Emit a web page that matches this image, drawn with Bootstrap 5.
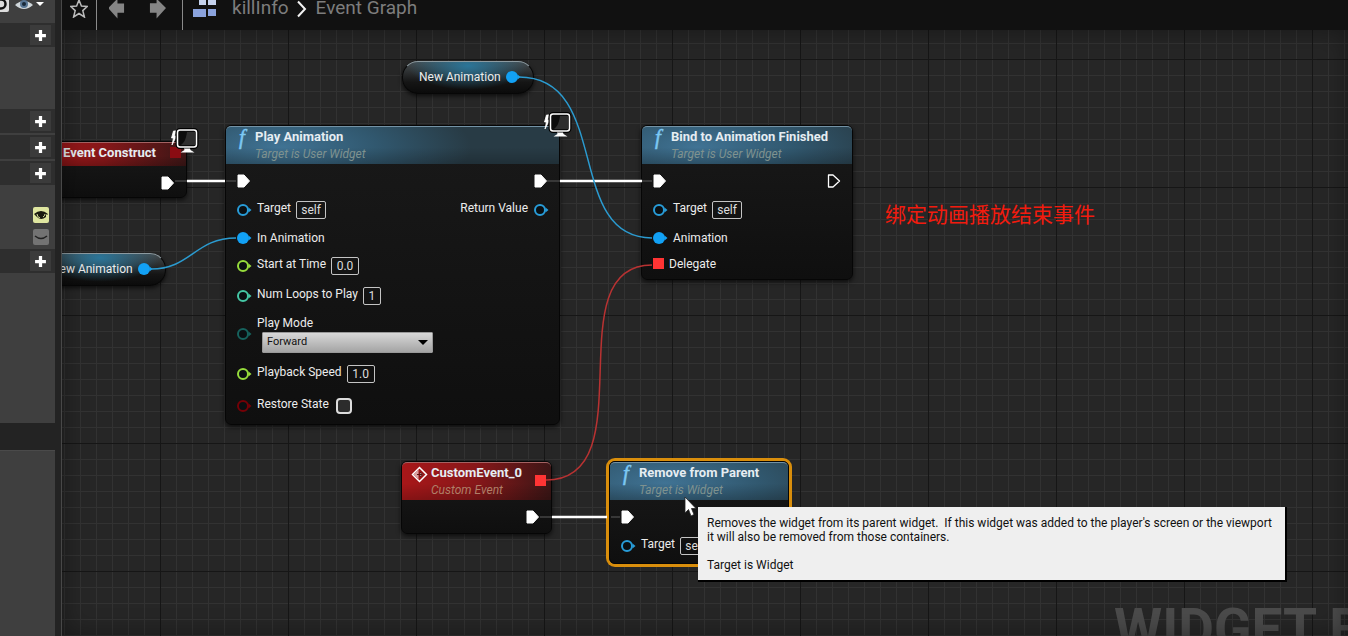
<!DOCTYPE html>
<html lang="en">
<head>
<meta charset="utf-8">
<meta name="viewport" content="width=device-width, initial-scale=1">
<title>killInfo - Event Graph</title>
<link href="https://cdn.jsdelivr.net/npm/bootstrap@5.3.0/dist/css/bootstrap.min.css" rel="stylesheet">
<style>
body{font-family:Roboto,"Noto Sans CJK SC",sans-serif;font-size:12px;line-height:14px;color:#ececec;background:#222}
button{border:0;padding:0;background:none;color:inherit}
svg{display:block}
/* side panel */
.side{width:62px;background:#232323;border-right:1px solid #484848}
.panel{width:55px;background:#3f3f3f}
.panel-last{border-top:1px solid #4a4a4a}
.tools{height:23px;padding-right:10px}
.sec{height:24px;background:#2e2e2e;margin-bottom:2px;padding-right:4px}
.sec button{width:21px;height:20px;background:#3b3b3b;display:grid;place-items:center}
.space-a{height:60px}.space-b{height:20px}.space-c{height:148px}.space-d{height:27px}
.eye{width:16px;height:16px;border-radius:2px;background:#dfe6a0;display:grid;place-items:center}
.eye.off{background:#737373}
.eyes{padding-right:6px;height:42px;gap:6px}
/* breadcrumb bar */
.crumbs{height:30px;background:#111;color:#7d7d7d;font-size:19px;line-height:16px}
.crumbs a{color:#7d7d7d;text-decoration:none}
.crumbs .bar-line{width:1px;height:30px;background:#8a8a8a}
.bar-top{height:18px}
/* graph */
.graph{background-color:#262626;
 background-image:linear-gradient(#161616 1px,transparent 1px),linear-gradient(90deg,#161616 1px,transparent 1px),linear-gradient(#323232 1px,transparent 1px),linear-gradient(90deg,#323232 1px,transparent 1px);
 background-size:128px 128px,128px 128px,16px 16px,16px 16px;
 background-position:0 29px,98px 0,0 13px,2px 0}
.graph::after{content:"";position:absolute;inset:0;box-shadow:inset 0 0 26px #0006;pointer-events:none}
.wires{position:absolute;left:0;top:0;width:100%;height:100%;overflow:hidden}
.node{position:absolute;border-radius:6px;border:1px solid #060606;background:linear-gradient(#191919,#0f0f0f);box-shadow:0 2px 5px #000a;padding-bottom:4px}
.node header{height:38px;border-radius:5px 5px 0 0;padding:2px 10px 0 29px;position:relative;border-top:1px solid #7392a5;
 background:linear-gradient(#0000 55%,#0003),radial-gradient(ellipse 190px 60px at 55px 20px,#407394 0,#31586f 50%,#283b45 100%)}
.node header.event{border-top-color:#a46262;background:linear-gradient(#0000 55%,#0003),linear-gradient(90deg,#a81719 0,#871719 50%,#3c1616 100%)}
.node h2{font-size:13px;line-height:16px;font-weight:700;margin:0;color:#e6edf2;white-space:nowrap}
.node p{margin:0;font-style:italic;line-height:18px;color:#7f928f;white-space:nowrap}
.node .event p{color:#b07f68}
.fn{position:absolute;left:13px;top:0;font:italic 400 21px/20px "Liberation Serif",serif;color:#7cc8f4;-webkit-text-stroke:.5px #7cc8f4}
.diamond{position:absolute;left:9px;top:3px}
.prow{height:28px;padding:0 10px;gap:5px}
.prow.exec,.prow.loops{height:32px}
.prow.exec{padding-top:2px}
.prow.speed{height:36px}
.prow.mode{height:44px}
.prow label{padding-bottom:4px;white-space:nowrap}
.pin{width:16px;height:14px;flex:none}
.val{height:18px;border:1px solid #c4c4c4;border-radius:2px;background:transparent;color:#ddd;padding:0;text-align:center;font-size:12px;line-height:14px;width:28px}
.val.word{width:30px}
.val.one{width:18px}
.pickwrap{position:relative}
.pickwrap svg{position:absolute;right:5px;bottom:8px}
.pick{display:block;width:171px;height:21px;margin:2px 0 0 5px;border:1px solid #999;border-radius:1px;padding:0 4px;font-size:11px;line-height:16px;color:#111;appearance:none;background:linear-gradient(#d8d8d8,#a4a4a4)}
.prow .tick{width:16px;height:16px;margin:0 0 0 2px;border:2px solid #dcdcdc;border-radius:4px;background:#2c2c2c;appearance:none}
.pill{position:absolute;width:132px;height:33px;border-radius:16px;border:1px solid #070707;border-top-color:#8c9aa0;
 background:radial-gradient(ellipse 60px 24px at 50% 12%,#2b7598 0,transparent 100%),linear-gradient(#454b4e,#151515 65%,#0b0b0b);box-shadow:0 2px 4px #000a;padding:0 12px 1px 16px}
.screen{position:absolute}
.n-construct{left:-42px;top:111px;width:167px;height:57px}
.n-construct header{height:24px;padding-left:42px}
.n-play{left:163px;top:95px;width:335px}
.n-bind{left:579px;top:95px;width:212px;height:155px}
.n-custom{left:339px;top:431px;width:151px;height:73px}
.n-remove{left:547px;top:431px;width:180px;height:103px;box-shadow:0 0 0 3px #d98e0c}
.p-top{left:340px;top:31px}
.p-left{left:-28px;top:223px}
.s-one{left:107px;top:98px}.s-two{left:480px;top:82px}
.ev-pin{position:absolute;width:11px;height:11px;background:#ff3434}
.n-custom .ev-pin{right:5px;top:12px}
.n-construct .ev-pin{right:5px;top:4px;background:#8a0c12}
.remark{position:absolute;left:823px;top:169px;font-size:21px;line-height:28px;font-weight:400;color:#f21b0e;white-space:nowrap;font-family:"Noto Sans CJK SC",sans-serif}
.mark-word{position:absolute;left:1052px;top:569px;font-size:55px;line-height:60px;font-weight:700;color:#4b4b4b;white-space:nowrap}
.tip{position:absolute;left:636px;top:477px;width:589px;padding:9px 0 8px 9px;background:#efefef;color:#111;border:solid #000;border-width:0 2px 2px 0;white-space:pre-wrap;z-index:3}
.cursor{position:absolute;left:622px;top:466px;z-index:4}
</style>
</head>
<body>
<svg width="0" height="0" class="position-absolute" aria-hidden="true">
<defs>
<symbol id="plus" viewBox="0 0 12 12"><path d="M4.500 1h3v3.500H11v3H7.500V11h-3V7.500H1v-3h3.500z" fill="#fff"/></symbol>
<symbol id="exec" viewBox="0 0 16 14"><path d="M2 1h6l5.500 6L8 13H2z" fill="#fff" stroke="#fff" stroke-linejoin="round"/></symbol>
<symbol id="exec-open" viewBox="0 0 16 14"><path d="M2.500 1h4.500L13.500 7 7 13H2.500z" fill="#111" stroke="#fff" stroke-width="1.300" stroke-linejoin="round"/></symbol>
<symbol id="ring" viewBox="0 0 16 14"><circle cx="7" cy="7" r="5" fill="#0a0f12" stroke="currentColor" stroke-width="2"/><path d="M12.500 4.500 15.500 7l-3 2.500z" fill="currentColor"/></symbol>
<symbol id="dot" viewBox="0 0 16 14"><circle cx="7" cy="7" r="6" fill="currentColor"/><path d="M12.500 4.500 15.500 7l-3 2.500z" fill="currentColor"/></symbol>
<symbol id="monitor" viewBox="0 0 30 25"><path d="M4.500 3 2.500 10h2L3 17l4.500-9H5.500L7 3z" fill="#fff" stroke="#fff" stroke-width=".8"/><rect x="8.500" y="2" width="19" height="17" rx="2.500" fill="#0b0b0b" stroke="#000" stroke-width="4"/><rect x="8.500" y="2" width="19" height="17" rx="2.500" fill="#0c0c0c" stroke="#fff" stroke-width="1.500"/><path d="M18 4h8v13H12c4-3 5-7 6-13z" fill="#2e2e2e"/><path d="M15 20.500h6l.5 1.500 4 2.500h-14l4-2.500z" fill="#fff"/></symbol>
</defs>
</svg>
<div class="d-flex min-vh-100 overflow-hidden">
 <aside class="side flex-shrink-0 overflow-hidden d-flex flex-column">
  <div class="panel">
   <div class="tools d-flex justify-content-end align-items-start">
    <svg width="45" height="14" viewBox="0 0 45 14"><rect x="-4" y="-3" width="13" height="15" rx="2" fill="#ddd"/><circle cx="1" cy="4" r="4.500" fill="none" stroke="#111" stroke-width="2.500"/><path d="M15 5q9-8 18 0-9 8-18 0z" fill="#cfd6da"/><circle cx="24" cy="4" r="4" fill="#587694"/><circle cx="24" cy="4" r="2" fill="#182938"/><path d="M36 2h8l-4 4z" fill="#fff"/></svg>
   </div>
   <div class="sec d-flex justify-content-end align-items-center"><button aria-label="Add"><svg width="13" height="13"><use href="#plus"/></svg></button></div>
   <div class="space-a"></div>
   <div class="sec d-flex justify-content-end align-items-center"><button aria-label="Add graph"><svg width="13" height="13"><use href="#plus"/></svg></button></div>
   <div class="sec d-flex justify-content-end align-items-center"><button aria-label="Add function"><svg width="13" height="13"><use href="#plus"/></svg></button></div>
   <div class="sec d-flex justify-content-end align-items-center"><button aria-label="Add macro"><svg width="13" height="13"><use href="#plus"/></svg></button></div>
   <div class="space-b"></div>
   <div class="eyes d-flex flex-column align-items-end">
    <button class="eye" aria-label="Visible"><svg width="14" height="12" viewBox="0 0 14 12"><path d="M0 5q7-6 14 0l-1 1-1-1v3q-5 4-9 0z" fill="#1b1b10"/><path d="M3 5q0 3 3 4M9 8q2-1 2-3" stroke="#dfe6a0" fill="none"/></svg></button>
    <button class="eye off" aria-label="Hidden"><svg width="14" height="12" viewBox="0 0 14 12"><path d="M1 5q6 5 12 0" stroke="#222" stroke-width="1.500" fill="none"/></svg></button>
   </div>
   <div class="sec d-flex justify-content-end align-items-center"><button aria-label="Add variable"><svg width="13" height="13"><use href="#plus"/></svg></button></div>
   <div class="space-c"></div>
  </div>
  <div class="space-d"></div>
  <div class="panel panel-last flex-grow-1"></div>
 </aside>

 <div class="flex-grow-1 d-flex flex-column overflow-hidden">
  <nav class="crumbs d-flex align-items-start overflow-hidden" aria-label="Breadcrumb">
   <button class="bar-top ms-2" aria-label="Favourite"><svg width="18" height="18" viewBox="0 0 18 18"><path d="M9 0l2.400 6 6 .4-4.600 4.200 1.600 6.400L9 13.500 3.600 17l1.600-6.400L.6 6.400l6-.4z" fill="none" stroke="#bbb" stroke-width="1.500"/></svg></button>
   <span class="bar-line ms-2"></span>
   <button class="bar-top ms-2 ps-1" aria-label="Back"><svg width="16" height="19" viewBox="0 0 17 19"><path d="M-1 8 9-2v5h7v10H9v6z" fill="#858585"/></svg></button>
   <button class="bar-top ms-4" aria-label="Forward"><svg width="17" height="19" viewBox="0 0 18 19"><path d="M18 8 8-2v5H1v10h7v6z" fill="#858585"/></svg></button>
   <span class="bar-line ms-3"></span>
   <svg class="ms-2" width="29" height="18" viewBox="0 0 29 18"><path d="M8-3h7v8H8zM17-3h8v8h-8z" fill="#c5d2ed"/><path d="M2 9h13v8H2zM17 9h8v7h-8z" fill="#8ba3dd"/></svg>
   <a href="#" class="ms-2 ps-1">killInfo</a>
   <svg class="mx-2" width="11" height="18" viewBox="0 0 11 18"><path d="M1 1.500 8 9l-7 7.500" fill="none" stroke="#f2f2f2" stroke-width="2"/></svg>
   <a href="#" aria-current="page">Event Graph</a>
  </nav>

  <main class="graph flex-grow-1 position-relative overflow-hidden">
   <div class="mark-word">WIDGET BLUEPRINT</div>

   <article class="node n-construct"><header class="event"><h2>Event Construct</h2><span class="ev-pin"></span></header>
    <div class="prow exec d-flex align-items-center justify-content-end"><svg class="pin"><use href="#exec"/></svg></div></article>

   <article class="node n-play"><header><span class="fn">f</span><h2>Play Animation</h2><p>Target is User Widget</p></header>
    <div class="prow exec d-flex align-items-center justify-content-between"><svg class="pin"><use href="#exec"/></svg><svg class="pin"><use href="#exec"/></svg></div>
    <div class="prow d-flex align-items-center"><svg class="pin" color="#289cd8"><use href="#ring"/></svg><label for="t1">Target</label><input id="t1" class="val word" value="self" readonly><span class="ms-auto pb-1">Return Value</span><svg class="pin" color="#289cd8"><use href="#ring"/></svg></div>
    <div class="prow d-flex align-items-center"><svg class="pin" color="#12a1f5"><use href="#dot"/></svg><span>In Animation</span></div>
    <div class="prow d-flex align-items-center"><svg class="pin" color="#96dc3c"><use href="#ring"/></svg><label for="st">Start at Time</label><input id="st" class="val" value="0.0"></div>
    <div class="prow loops d-flex align-items-center"><svg class="pin" color="#45c7a5"><use href="#ring"/></svg><label for="nl">Num Loops to Play</label><input id="nl" class="val one" value="1"></div>
    <div class="prow mode d-flex align-items-center"><svg class="pin" color="#16625d"><use href="#ring"/></svg><div class="pickwrap"><label for="pm" class="d-block pb-0">Play Mode</label><select id="pm" class="pick"><option>Forward</option></select><svg width="10" height="5"><path d="M0 0h10L5 5z"/></svg></div></div>
    <div class="prow speed d-flex align-items-center"><svg class="pin" color="#96dc3c"><use href="#ring"/></svg><label for="ps">Playback Speed</label><input id="ps" class="val" value="1.0"></div>
    <div class="prow d-flex align-items-center"><svg class="pin" color="#740006"><use href="#ring"/></svg><label for="rs">Restore State</label><input id="rs" class="tick" type="checkbox"></div>
   </article>

   <article class="node n-bind"><header><span class="fn">f</span><h2>Bind to Animation Finished</h2><p>Target is User Widget</p></header>
    <div class="prow exec d-flex align-items-center justify-content-between"><svg class="pin"><use href="#exec"/></svg><svg class="pin"><use href="#exec-open"/></svg></div>
    <div class="prow d-flex align-items-center"><svg class="pin" color="#289cd8"><use href="#ring"/></svg><label for="t2">Target</label><input id="t2" class="val word" value="self" readonly></div>
    <div class="prow d-flex align-items-center"><svg class="pin" color="#12a1f5"><use href="#dot"/></svg><span>Animation</span></div>
    <div class="prow d-flex align-items-center pb-1"><svg width="12" height="14"><rect x="1" y="1" width="11" height="11" fill="#ff3434"/></svg><span>Delegate</span></div>
   </article>

   <article class="node n-custom"><header class="event"><svg class="diamond" width="17" height="17" viewBox="0 0 17 17"><path d="M8.500 1.500l7 7-7 7-7-7z" fill="none" stroke="#fff" stroke-width="1.500"/><path d="M7.500 3.500v10l-5-5z" fill="#d9a0a0"/><path d="M6 8.500h5M9 6l3 2.500L9 11z" fill="#fff" stroke="#5e1010"/></svg><h2>CustomEvent_0</h2><p>Custom Event</p><span class="ev-pin"></span></header>
    <div class="prow exec d-flex align-items-center justify-content-end"><svg class="pin"><use href="#exec"/></svg></div></article>

   <article class="node n-remove"><header><span class="fn">f</span><h2>Remove from Parent</h2><p>Target is Widget</p></header>
    <div class="prow exec d-flex align-items-center"><svg class="pin"><use href="#exec"/></svg></div>
    <div class="prow d-flex align-items-center"><svg class="pin" color="#289cd8"><use href="#ring"/></svg><label for="t3">Target</label><input id="t3" class="val word" value="self" readonly></div>
   </article>

   <div class="pill p-top d-flex align-items-center justify-content-between"><span>New Animation</span><svg class="pin" color="#12a1f5"><use href="#dot"/></svg></div>
   <div class="pill p-left d-flex align-items-center justify-content-between"><span>New Animation</span><svg class="pin" color="#12a1f5"><use href="#dot"/></svg></div>

   <svg class="wires" aria-hidden="true"><g transform="translate(-62 -30)" fill="none" stroke-width="1.500">
    <path d="M187 181h38M560 181h82M552 517h55" stroke="#fff" stroke-width="2.500"/>
    <path d="M175 181h12M547 181h13M226 181h10M642 181h10M540 517h12M611 517h9" stroke="#444"/>
    <path d="M519 77C612 77 564 238 652 238M151 269C191 269 195 238 236 238" stroke="#2b9bd0"/>
    <path d="M546 480C647 480 554 265 652 265" stroke="#b83232"/></g></svg>
   <svg class="screen s-one" width="30" height="25"><use href="#monitor"/></svg>
   <svg class="screen s-two" width="30" height="25"><use href="#monitor"/></svg>

   <div class="remark" lang="zh-CN">绑定动画播放结束事件</div>
   <div class="tip" role="tooltip">Removes the widget from its parent widget.  If this widget was added to the player's screen or the viewport
it will also be removed from those containers.

Target is Widget</div>
   <svg class="cursor" width="14" height="22" viewBox="0 0 14 22"><path d="M1 1v16l3.500-3.500L7 20l3-1.500L7.500 12.500H12z" fill="#fff" stroke="#222" stroke-width=".8"/></svg>
  </main>
 </div>
</div>
<script src="https://cdn.jsdelivr.net/npm/bootstrap@5.3.0/dist/js/bootstrap.bundle.min.js"></script>
</body>
</html>
